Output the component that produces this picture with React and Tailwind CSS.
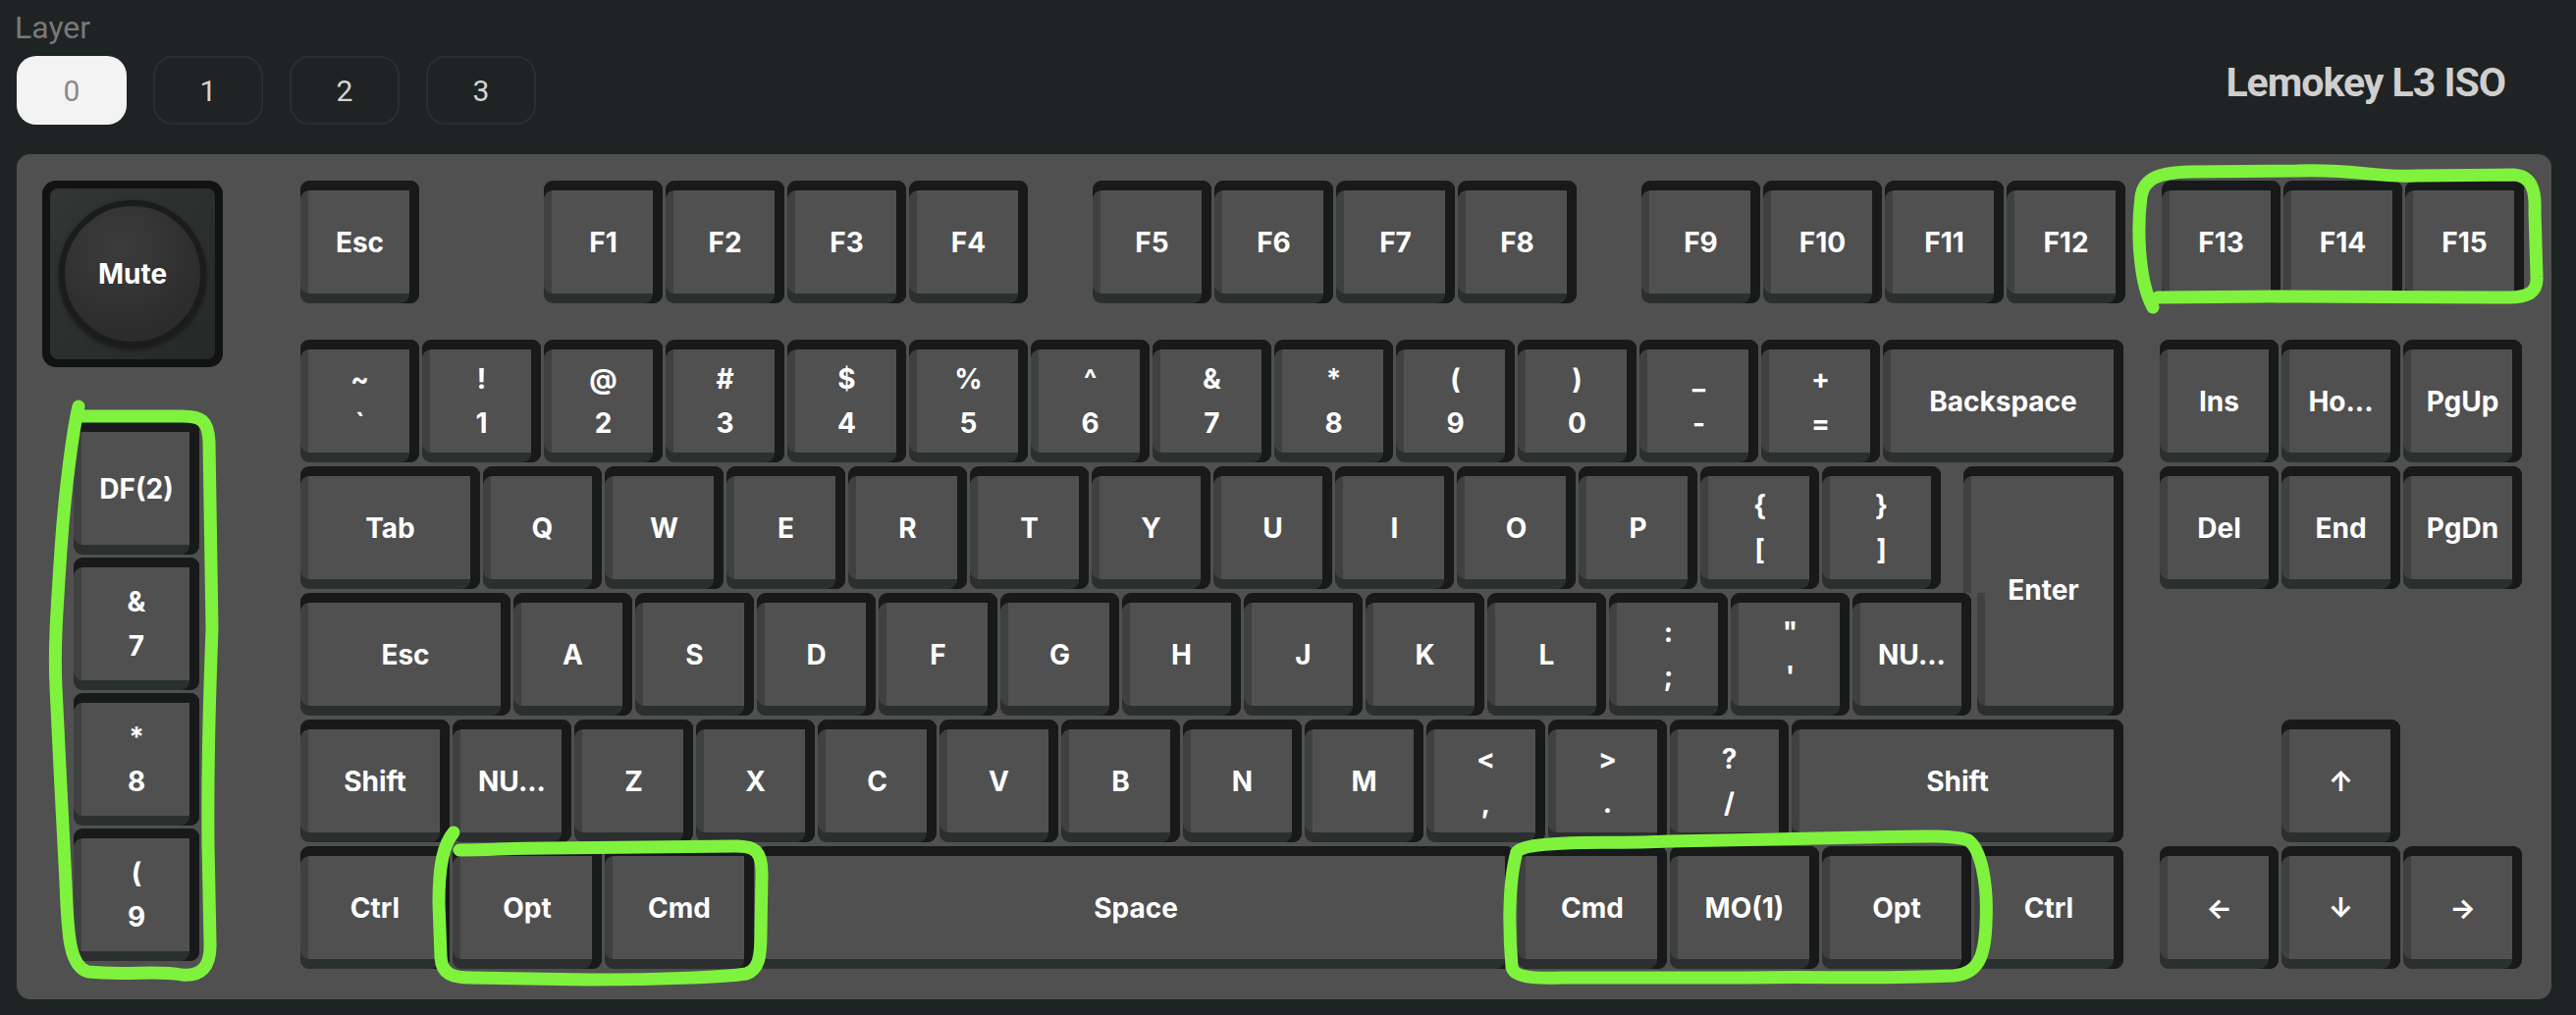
import React from 'react';

const W = {
  1: 'w-[121px]',
  1.25: 'w-[152px]',
  1.5: 'w-[183px]',
  1.75: 'w-[214px]',
  2: 'w-[245px]',
  2.75: 'w-[338px]',
  6.25: 'w-[772px]',
};

const capShadow =
  'shadow-[inset_0_10px_0_#18191a,inset_-10px_0_0_#18191a,inset_0_-10px_0_#2c2f30,inset_8px_0_0_#3f4141]';

const Legend = ({ label }) =>
  Array.isArray(label) ? (
    <div className="flex flex-col items-center">
      <span className="h-[45px] leading-[45px]">{label[0]}</span>
      <span className="h-[45px] leading-[45px]">{label[1]}</span>
    </div>
  ) : (
    <span>{label}</span>
  );

const Key = ({ label, w = 1, h = 'h-[125px]' }) => (
  <div
    className={`${W[w]} ${h} ${capShadow} shrink-0 rounded-[9px] bg-[#505050] flex items-center justify-center text-white text-[28px] font-bold`}
  >
    <Legend label={label} />
  </div>
);

const Gap = ({ w }) => <div className={`${w} h-[125px] shrink-0`} />;

const Row = ({ children, className = '' }) => (
  <div className={`flex items-start gap-[3px] ${className}`}>{children}</div>
);

const keys = (list) => list.map((k, i) => <Key key={i} label={k[0]} w={k[1] || 1} />);

const numRow = [
  [['~', '`']], [['!', '1']], [['@', '2']], [['#', '3']], [['$', '4']], [['%', '5']],
  [['^', '6']], [['&', '7']], [['*', '8']], [['(', '9']], [[')', '0']], [['_', '-']],
  [['+', '=']], ['Backspace', 2],
];
const qRow = [
  ['Tab', 1.5], ['Q'], ['W'], ['E'], ['R'], ['T'], ['Y'], ['U'], ['I'], ['O'], ['P'],
  [['{', '[']], [['}', ']']],
];
const aRow = [
  ['Esc', 1.75], ['A'], ['S'], ['D'], ['F'], ['G'], ['H'], ['J'], ['K'], ['L'],
  [[':', ';']], [['"', "'"]], ['NU...'],
];
const zRow = [
  ['Shift', 1.25], ['NU...'], ['Z'], ['X'], ['C'], ['V'], ['B'], ['N'], ['M'],
  [['<', ',']], [['>', '.']], [['?', '/']], ['Shift', 2.75],
];
const bRow = [
  ['Ctrl', 1.25], ['Opt', 1.25], ['Cmd', 1.25], ['Space', 6.25], ['Cmd', 1.25],
  ['MO(1)', 1.25], ['Opt', 1.25], ['Ctrl', 1.25],
];

const Knob = () => (
  <div className="w-[184px] h-[190px] rounded-[14px] bg-[#111213] p-[8px]">
    <div className="w-full h-full rounded-[8px] bg-[linear-gradient(135deg,#333434,#272828)] flex items-center justify-center">
      <div className="w-[150px] h-[150px] rounded-full border-[6px] border-[#1b1c1c] bg-[radial-gradient(circle_at_40%_30%,#3c3c3c,#2c2c2c_70%)] shadow-[0_2px_4px_rgba(0,0,0,0.5)] flex items-center justify-center text-white text-[28px] font-bold">
        Mute
      </div>
    </div>
  </div>
);

const Annotations = () => (
  <svg
    className="absolute inset-0 pointer-events-none"
    width="2624"
    height="1034"
    viewBox="0 0 2624 1034"
    fill="none"
    stroke="#7ff23e"
    strokeWidth="13"
    strokeLinecap="round"
    strokeLinejoin="round"
  >
    <path d="M2193 313 C2180 290 2176 240 2181 200 C2184 182 2198 176 2230 175 L2340 174 C2400 172 2420 181 2460 179 L2560 178 C2578 179 2583 192 2582 215 L2584 282 C2585 298 2575 303 2555 303 L2320 302 L2198 303" />
    <path d="M80 414 C74 440 66 500 62 560 C58 620 55 660 57 700 C60 760 64 850 67 900 C69 950 70 985 90 990 C130 994 160 988 185 993 C205 995 215 985 214 960 L212 860 C211 760 214 700 216 640 L213 450 C212 428 205 424 185 424 L82 424" />
    <path d="M462 848 C452 860 447 880 447 920 L449 975 C450 992 460 996 480 996 L600 998 C680 998 740 995 760 992 C773 988 775 975 775 950 L776 890 C776 868 770 862 750 862 L560 864 C520 864 500 866 468 866" />
    <path d="M1545 868 C1536 900 1537 950 1540 985 C1542 995 1560 997 1590 996 L1780 996 C1850 994 1900 998 1990 994 C2015 992 2022 975 2023 940 C2025 900 2018 865 2005 856 C1990 850 1950 852 1900 853 L1700 857 C1640 860 1600 856 1560 862 C1550 864 1546 866 1545 868" />
  </svg>
);

export default function App() {
  return (
    <div className="relative w-[2624px] h-[1034px] overflow-hidden bg-[#202324] font-['Inter',sans-serif]">
      <div className="flex justify-between items-start">
        <div className="pl-[17px] pt-[10px]">
          <div className="text-[32px] leading-[36px] text-[#77797a] ml-[-2px] font-['Roboto',sans-serif]">Layer</div>
          <div className="flex gap-[27px] mt-[11px] font-['Roboto',sans-serif]">
            <button className="w-[112px] h-[70px] rounded-[20px] bg-[#f3f3f3] text-[#8a8a8a] text-[30px]">0</button>
            <button className="w-[112px] h-[70px] rounded-[20px] border-2 border-[#2c2f31] text-[#d5d5d5] text-[30px]">1</button>
            <button className="w-[112px] h-[70px] rounded-[20px] border-2 border-[#2c2f31] text-[#d5d5d5] text-[30px]">2</button>
            <button className="w-[112px] h-[70px] rounded-[20px] border-2 border-[#2c2f31] text-[#d5d5d5] text-[30px]">3</button>
          </div>
        </div>
        <div className="pr-[72px] pt-[59px] text-[41px] leading-[50px] font-bold tracking-[-1px] text-[#cfcfcf] font-['Roboto',sans-serif]">Lemokey L3 ISO</div>
      </div>

      <div className="ml-[17px] mt-[30px] w-[2582px] h-[861px] rounded-[14px] bg-[#505050] pt-[27px] pl-[26px] flex items-start">
        <div className="flex flex-col shrink-0">
          <Knob />
          <div className="ml-[32px] mt-[56px] flex flex-col gap-[3px]">
            <div className={`w-[128px] h-[135px] ${capShadow} rounded-[9px] bg-[#505050] flex items-center justify-center text-white text-[28px] font-bold`}>DF(2)</div>
            <div className={`w-[128px] h-[135px] ${capShadow} rounded-[9px] bg-[#505050] flex items-center justify-center text-white text-[28px] font-bold`}><Legend label={['&', '7']} /></div>
            <div className={`w-[128px] h-[135px] ${capShadow} rounded-[9px] bg-[#505050] flex items-center justify-center text-white text-[28px] font-bold`}><Legend label={['*', '8']} /></div>
            <div className={`w-[128px] h-[135px] ${capShadow} rounded-[9px] bg-[#505050] flex items-center justify-center text-white text-[28px] font-bold`}><Legend label={['(', '9']} /></div>
          </div>
        </div>

        <div className="ml-[79px] flex flex-col">
          <Row>
            <Key label="Esc" />
            <Gap w="w-[121px]" />
            {keys([['F1'], ['F2'], ['F3'], ['F4']])}
            <Gap w="w-[60px]" />
            {keys([['F5'], ['F6'], ['F7'], ['F8']])}
            <Gap w="w-[60px]" />
            {keys([['F9'], ['F10'], ['F11'], ['F12']])}
            <Gap w="w-[31px]" />
            {keys([['F13'], ['F14'], ['F15']])}
          </Row>

          <div className="mt-[37px] flex flex-col gap-[4px]">
            <Row>
              {keys(numRow)}
              <Gap w="w-[31px]" />
              {keys([['Ins'], ['Ho...'], ['PgUp']])}
            </Row>
            <Row>
              {keys(qRow)}
              <div className="ml-[20px] w-[163px] h-[129px] -mb-[4px] shrink-0 rounded-t-[9px] bg-[#505050] shadow-[inset_0_10px_0_#18191a,inset_-10px_0_0_#18191a,inset_8px_0_0_#3f4141] flex items-center justify-center text-white text-[28px] font-bold">
                <span className="relative z-10 mt-[122px]">Enter</span>
              </div>
              <Gap w="w-[31px]" />
              {keys([['Del'], ['End'], ['PgDn']])}
            </Row>
            <Row>
              {keys(aRow)}
              <div className="ml-[3px] w-[149px] h-[125px] shrink-0 rounded-b-[9px] bg-[#505050] shadow-[inset_-10px_0_0_#18191a,inset_0_-10px_0_#2c2f30,inset_8px_0_0_#3f4141]" />
            </Row>
            <Row>
              {keys(zRow)}
              <Gap w="w-[31px]" />
              <Gap w="w-[121px]" />
              <Key label="↑" />
            </Row>
            <Row>
              {keys(bRow)}
              <Gap w="w-[31px]" />
              {keys([['←'], ['↓'], ['→']])}
            </Row>
          </div>
        </div>
      </div>

      <Annotations />
    </div>
  );
}
